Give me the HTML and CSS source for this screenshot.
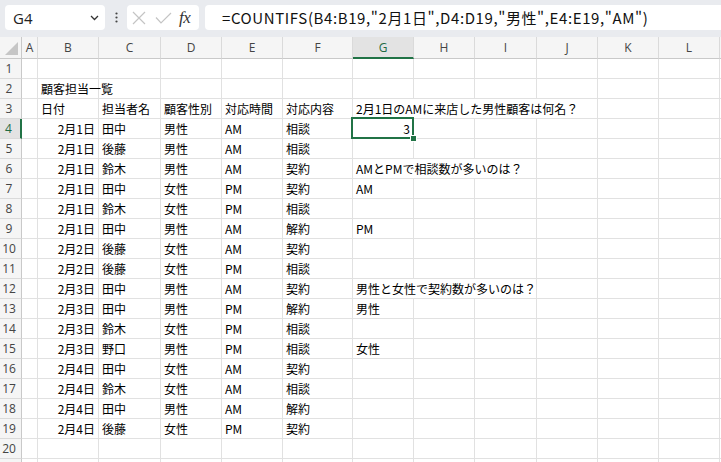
FILE: index.html
```
<!DOCTYPE html>
<html lang="ja">
<head>
<meta charset="utf-8">
<title>Sheet</title>
<link rel="stylesheet" href="styles.css">
</head>
<body>
<div class="toolbar">
  <div class="namebox"><span>G4</span>
    <svg width="9" height="6" viewBox="0 0 9 6"><path d="M1 1 L4.5 4.5 L8 1" fill="none" stroke="#333" stroke-width="1.3"/></svg>
  </div>
  <div class="dots"><svg width="3" height="11" viewBox="0 0 3 11"><circle cx="1.5" cy="1.5" r="1.1" fill="#444"/><circle cx="1.5" cy="5.5" r="1.1" fill="#444"/><circle cx="1.5" cy="9.5" r="1.1" fill="#444"/></svg></div>
  <div class="fxbox">
    <svg width="14" height="14" viewBox="0 0 14 14"><path d="M1 1 L13 13 M13 1 L1 13" stroke="#c4c4c4" stroke-width="1.2" fill="none"/></svg>
    <svg width="17" height="12" viewBox="0 0 17 12"><path d="M1 5.5 L6 11 L16 1" stroke="#c4c4c4" stroke-width="1.2" fill="none"/></svg>
    <span class="fx">fx</span>
  </div>
  <div class="formula">=COUNTIFS(B4:B19,"2月1日",D4:D19,"男性",E4:E19,"AM")</div>
</div>
<div class="sheet">
  <div class="corner"><span class="tri"></span></div>
  <div class="ch">A</div><div class="ch">B</div><div class="ch">C</div><div class="ch">D</div><div class="ch">E</div><div class="ch">F</div><div class="ch sel">G</div><div class="ch">H</div><div class="ch">I</div><div class="ch">J</div><div class="ch">K</div><div class="ch">L</div><div class="ch"></div>

  <div class="rh">1</div><div class="c"></div><div class="c"></div><div class="c"></div><div class="c"></div><div class="c"></div><div class="c"></div><div class="c"></div><div class="c"></div><div class="c"></div><div class="c"></div><div class="c"></div><div class="c"></div><div class="c"></div>
  <div class="rh">2</div><div class="c"></div><div class="c">顧客担当一覧</div><div class="c"></div><div class="c"></div><div class="c"></div><div class="c"></div><div class="c"></div><div class="c"></div><div class="c"></div><div class="c"></div><div class="c"></div><div class="c"></div><div class="c"></div>
  <div class="rh">3</div><div class="c"></div><div class="c">日付</div><div class="c">担当者名</div><div class="c">顧客性別</div><div class="c">対応時間</div><div class="c">対応内容</div><div class="c s4">2月1日のAMに来店した男性顧客は何名？</div><div class="c"></div><div class="c"></div><div class="c"></div>
  <div class="rh sel">4</div><div class="c"></div><div class="c r">2月1日</div><div class="c">田中</div><div class="c">男性</div><div class="c">AM</div><div class="c">相談</div><div class="c r active">3</div><div class="c"></div><div class="c"></div><div class="c"></div><div class="c"></div><div class="c"></div><div class="c"></div>
  <div class="rh">5</div><div class="c"></div><div class="c r">2月1日</div><div class="c">後藤</div><div class="c">男性</div><div class="c">AM</div><div class="c">相談</div><div class="c"></div><div class="c"></div><div class="c"></div><div class="c"></div><div class="c"></div><div class="c"></div><div class="c"></div>
  <div class="rh">6</div><div class="c"></div><div class="c r">2月1日</div><div class="c">鈴木</div><div class="c">男性</div><div class="c">AM</div><div class="c">契約</div><div class="c s3">AMとPMで相談数が多いのは？</div><div class="c"></div><div class="c"></div><div class="c"></div><div class="c"></div>
  <div class="rh">7</div><div class="c"></div><div class="c r">2月1日</div><div class="c">田中</div><div class="c">女性</div><div class="c">PM</div><div class="c">契約</div><div class="c">AM</div><div class="c"></div><div class="c"></div><div class="c"></div><div class="c"></div><div class="c"></div><div class="c"></div>
  <div class="rh">8</div><div class="c"></div><div class="c r">2月1日</div><div class="c">鈴木</div><div class="c">女性</div><div class="c">PM</div><div class="c">相談</div><div class="c"></div><div class="c"></div><div class="c"></div><div class="c"></div><div class="c"></div><div class="c"></div><div class="c"></div>
  <div class="rh">9</div><div class="c"></div><div class="c r">2月1日</div><div class="c">田中</div><div class="c">男性</div><div class="c">AM</div><div class="c">解約</div><div class="c">PM</div><div class="c"></div><div class="c"></div><div class="c"></div><div class="c"></div><div class="c"></div><div class="c"></div>
  <div class="rh">10</div><div class="c"></div><div class="c r">2月2日</div><div class="c">後藤</div><div class="c">女性</div><div class="c">AM</div><div class="c">契約</div><div class="c"></div><div class="c"></div><div class="c"></div><div class="c"></div><div class="c"></div><div class="c"></div><div class="c"></div>
  <div class="rh">11</div><div class="c"></div><div class="c r">2月2日</div><div class="c">後藤</div><div class="c">女性</div><div class="c">PM</div><div class="c">相談</div><div class="c"></div><div class="c"></div><div class="c"></div><div class="c"></div><div class="c"></div><div class="c"></div><div class="c"></div>
  <div class="rh">12</div><div class="c"></div><div class="c r">2月3日</div><div class="c">田中</div><div class="c">男性</div><div class="c">AM</div><div class="c">契約</div><div class="c s3">男性と女性で契約数が多いのは？</div><div class="c"></div><div class="c"></div><div class="c"></div><div class="c"></div>
  <div class="rh">13</div><div class="c"></div><div class="c r">2月3日</div><div class="c">田中</div><div class="c">男性</div><div class="c">PM</div><div class="c">解約</div><div class="c">男性</div><div class="c"></div><div class="c"></div><div class="c"></div><div class="c"></div><div class="c"></div><div class="c"></div>
  <div class="rh">14</div><div class="c"></div><div class="c r">2月3日</div><div class="c">鈴木</div><div class="c">女性</div><div class="c">PM</div><div class="c">相談</div><div class="c"></div><div class="c"></div><div class="c"></div><div class="c"></div><div class="c"></div><div class="c"></div><div class="c"></div>
  <div class="rh">15</div><div class="c"></div><div class="c r">2月3日</div><div class="c">野口</div><div class="c">男性</div><div class="c">PM</div><div class="c">相談</div><div class="c">女性</div><div class="c"></div><div class="c"></div><div class="c"></div><div class="c"></div><div class="c"></div><div class="c"></div>
  <div class="rh">16</div><div class="c"></div><div class="c r">2月4日</div><div class="c">田中</div><div class="c">女性</div><div class="c">AM</div><div class="c">契約</div><div class="c"></div><div class="c"></div><div class="c"></div><div class="c"></div><div class="c"></div><div class="c"></div><div class="c"></div>
  <div class="rh">17</div><div class="c"></div><div class="c r">2月4日</div><div class="c">鈴木</div><div class="c">女性</div><div class="c">AM</div><div class="c">相談</div><div class="c"></div><div class="c"></div><div class="c"></div><div class="c"></div><div class="c"></div><div class="c"></div><div class="c"></div>
  <div class="rh">18</div><div class="c"></div><div class="c r">2月4日</div><div class="c">田中</div><div class="c">男性</div><div class="c">AM</div><div class="c">解約</div><div class="c"></div><div class="c"></div><div class="c"></div><div class="c"></div><div class="c"></div><div class="c"></div><div class="c"></div>
  <div class="rh">19</div><div class="c"></div><div class="c r">2月4日</div><div class="c">後藤</div><div class="c">女性</div><div class="c">PM</div><div class="c">契約</div><div class="c"></div><div class="c"></div><div class="c"></div><div class="c"></div><div class="c"></div><div class="c"></div><div class="c"></div>
  <div class="rh">20</div><div class="c"></div><div class="c"></div><div class="c"></div><div class="c"></div><div class="c"></div><div class="c"></div><div class="c"></div><div class="c"></div><div class="c"></div><div class="c"></div><div class="c"></div><div class="c"></div><div class="c"></div>
  <div class="rh"></div><div class="c"></div><div class="c"></div><div class="c"></div><div class="c"></div><div class="c"></div><div class="c"></div><div class="c"></div><div class="c"></div><div class="c"></div><div class="c"></div><div class="c"></div><div class="c"></div><div class="c"></div>
</div>
</body>
</html>
```
FILE: styles.css
```
html, body {
  margin: 0;
  padding: 0;
}
body {
  width: 721px;
  height: 462px;
  overflow: hidden;
  background: #fff;
  font-family: "Noto Sans CJK JP", sans-serif;
  color: #000;
}
.toolbar {
  display: flex;
  height: 37px;
  box-sizing: border-box;
  padding: 5px 0 7px 5px;
  background: #e9ebef;
}
.namebox {
  width: 100px;
  box-sizing: border-box;
  background: #fff;
  border-radius: 4px;
  display: flex;
  align-items: center;
  justify-content: space-between;
  padding: 0 6px 0 8px;
  font-family: "Open Sans", "Noto Sans", sans-serif;
  font-size: 15px;
  color: #222;
}
.dots {
  width: 22px;
  display: flex;
  align-items: center;
  justify-content: center;
}
.fxbox {
  width: 72px;
  box-sizing: border-box;
  background: #fff;
  border-radius: 4px;
  display: flex;
  align-items: center;
  padding: 0 0 0 5px;
  gap: 9px;
}
.fx {
  font-family: "Liberation Serif", serif;
  font-style: italic;
  font-size: 17px;
  color: #333;
  margin-left: -2px;
  letter-spacing: -0.5px;
}
.formula {
  flex: 1;
  margin-left: 6px;
  background: #fff;
  border-radius: 4px 0 0 4px;
  display: flex;
  align-items: center;
  padding-left: 17px;
  font-size: 15px;
  letter-spacing: 0.6px;
  white-space: nowrap;
  color: #111;
}
.sheet {
  display: grid;
  grid-template-columns: 22px 16px 61px 62px 61px 61px 70px 61px 61px 62px 61px 61px 61px 20px;
  grid-template-rows: 22px repeat(21, 20px);
}
.sheet > div {
  box-sizing: border-box;
  white-space: nowrap;
}
.corner {
  background: #f5f5f5;
  border-right: 1px solid #c9c9c9;
  border-bottom: 1px solid #c9c9c9;
  position: relative;
}
.tri {
  position: absolute;
  right: 3px;
  bottom: 3px;
  width: 0;
  height: 0;
  border-left: 13px solid transparent;
  border-bottom: 13px solid #c6c6c6;
}
.ch {
  background: #f5f5f5;
  border-right: 1px solid #dadada;
  border-bottom: 1px solid #c9c9c9;
  text-align: center;
  font-family: "Open Sans", "Noto Sans", sans-serif;
  font-size: 12px;
  line-height: 21px;
  color: #444;
}
.ch.sel {
  background: #e3e3e3;
  color: #1f6b43;
  border-bottom: 2px solid #217346;
}
.rh {
  background: #f5f5f5;
  border-right: 1px solid #c9c9c9;
  border-bottom: 1px solid #dadada;
  text-align: center;
  padding-right: 3px;
  font-family: "Open Sans", "Noto Sans", sans-serif;
  font-size: 12px;
  line-height: 19px;
  color: #444;
}
.rh.sel {
  background: #e3e3e3;
  color: #1f6b43;
  border-right: 2px solid #217346;
}
.c {
  border-right: 1px solid #e1e1e1;
  border-bottom: 1px solid #e1e1e1;
  font-size: 12px;
  line-height: 19px;
  padding: 0 3px 0 3px;
}
.c.r {
  text-align: right;
  padding-right: 3px;
}
.s3 {
  grid-column: span 3;
}
.s4 {
  grid-column: span 4;
}
.active {
  position: relative;
}
.active::after {
  content: "";
  position: absolute;
  left: -2px;
  top: -2px;
  right: -1px;
  bottom: -1px;
  border: 2px solid #217346;
}
.active::before {
  content: "";
  position: absolute;
  right: -4px;
  bottom: -4px;
  width: 5px;
  height: 5px;
  background: #217346;
  border: 1px solid #fff;
  z-index: 2;
}
```
